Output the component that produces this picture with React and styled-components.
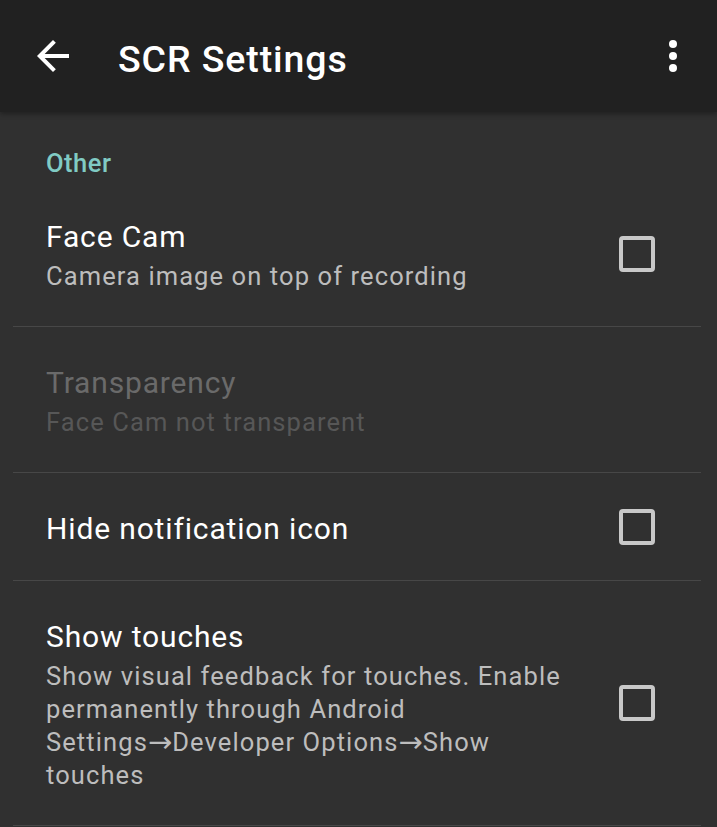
import React from 'react'
import styled, { createGlobalStyle } from "styled-components";

const GlobalStyle = createGlobalStyle`
  body {
    margin: 0;
    background: #303030;
    font-family: Roboto, "Noto Sans", sans-serif;
  }
`;

const Screen = styled.div`
  width: 717px;
  height: 827px;
  overflow: hidden;
  background: #303030;
`;

const Toolbar = styled.header`
  position: relative;
  z-index: 1;
  height: 112px;
  display: flex;
  align-items: center;
  background: #212121;
  box-shadow: 0 2px 5px rgba(0, 0, 0, 0.35);
`;

const IconButton = styled.div`
  width: 48px;
  height: 48px;
  display: flex;
  align-items: center;
  justify-content: center;
  margin-left: ${(p) => p.left || 0}px;
  margin-right: ${(p) => p.right || 0}px;
`;

const Title = styled.h1`
  margin: 6px 0 0 41px;
  flex: 1;
  font-size: 37.5px;
  line-height: 44px;
  font-weight: 500;
  letter-spacing: 0.9px;
  color: #ffffff;
`;

const List = styled.div`
  padding: 0 16px 0 13px;
`;

const CategoryHeader = styled.div`
  padding: 36px 0 3px 33px;
  font-size: 25.5px;
  line-height: 30px;
  font-weight: 500;
  letter-spacing: 0.5px;
  color: #80cbc4;
`;

const Row = styled.div`
  display: flex;
  align-items: center;
  padding: 38px 46px 33px 33px;
  border-bottom: 1px solid #474747;
`;

const RowText = styled.div`
  flex: 1;
  max-width: 533px;
`;

const RowTitle = styled.div`
  font-size: 30px;
  line-height: 36px;
  letter-spacing: 0.85px;
  color: ${(p) => (p.disabled ? "#6a6a6a" : "#ffffff")};
`;

const RowSummary = styled.div`
  margin-top: 5px;
  font-size: 25.5px;
  line-height: 33px;
  letter-spacing: 1.1px;
  color: ${(p) => (p.disabled ? "#575757" : "#bdbdbd")};
`;

const Arrow = styled.span`
  font-family: "DejaVu Sans", sans-serif;
  font-size: 29px;
  letter-spacing: 0;
  vertical-align: -1px;
`;

const CheckBox = styled.div`
  margin-left: auto;
  margin-top: -5px;
  width: 36px;
  height: 36px;
  box-sizing: border-box;
  border: 4px solid #c8c8c8;
  border-radius: 4px;
`;

const BackIcon = () => (
  <svg width="48" height="48" viewBox="0 0 24 24">
    <path fill="#fff" d="M20 11H7.83l5.59-5.59L12 4l-8 8 8 8 1.41-1.41L7.83 13H20v-2z" />
  </svg>
);

const MoreIcon = () => (
  <svg width="48" height="48" viewBox="0 0 24 24">
    <circle cx="12" cy="6" r="2" fill="#fff" />
    <circle cx="12" cy="12" r="2" fill="#fff" />
    <circle cx="12" cy="18" r="2" fill="#fff" />
  </svg>
);

// arrows in the summary are drawn with a wider font, like on the device
const withArrows = (text) =>
  text.split("\u2192").map((part, i) => (
    <React.Fragment key={i}>
      {i > 0 && <Arrow>{"\u2192"}</Arrow>}
      {part}
    </React.Fragment>
  ));

const prefs = [
  { title: "Face Cam", summary: "Camera image on top of recording", check: true },
  { title: "Transparency", summary: "Face Cam not transparent", disabled: true },
  { title: "Hide notification icon", check: true },
  {
    title: "Show touches",
    summary:
      "Show visual feedback for touches. Enable permanently through Android Settings\u2192Developer Options\u2192Show touches",
    check: true,
  },
];

const App = () => {
  return (
    <>
      <GlobalStyle />
      <Screen>
        <Toolbar>
          <IconButton left={29}>
            <BackIcon />
          </IconButton>
          <Title>SCR Settings</Title>
          <IconButton right={20}>
            <MoreIcon />
          </IconButton>
        </Toolbar>
        <List>
          <CategoryHeader>Other</CategoryHeader>
          {prefs.map((p) => (
            <Row key={p.title}>
              <RowText>
                <RowTitle disabled={p.disabled}>{p.title}</RowTitle>
                {p.summary && (
                  <RowSummary disabled={p.disabled}>{withArrows(p.summary)}</RowSummary>
                )}
              </RowText>
              {p.check && <CheckBox />}
            </Row>
          ))}
        </List>
      </Screen>
    </>
  )
}

export default App
